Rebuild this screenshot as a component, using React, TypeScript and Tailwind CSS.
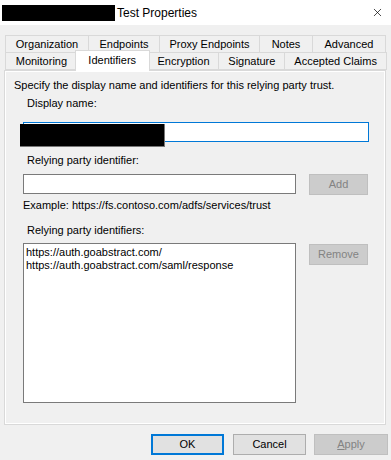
import { X } from 'lucide-react';

const rowOne = [
  { label: 'Organization', w: 'w-[83px]' },
  { label: 'Endpoints', w: 'w-[71px]' },
  { label: 'Proxy Endpoints', w: 'w-[100px]' },
  { label: 'Notes', w: 'w-[53px]' },
  { label: 'Advanced', w: 'w-[74px]' },
];

const rowTwo = [
  { label: 'Monitoring', w: 'w-[72px]' },
  { label: 'Identifiers', w: 'w-[69px]', active: true },
  { label: 'Encryption', w: 'w-[71px]' },
  { label: 'Signature', w: 'w-[66px]' },
  { label: 'Accepted Claims', w: 'w-[103px]' },
];

const identifiers = ['https://auth.goabstract.com/', 'https://auth.goabstract.com/saml/response'];

export default function App() {
  return (
    <div className="w-[391px] h-[460px] bg-[#f0f0f0] text-black text-[11px] font-['Liberation_Sans',Arial,sans-serif] overflow-hidden select-none">
      {/* Title bar */}
      <div className="h-[25px] bg-white flex items-center">
        <div className="ml-[2px] w-[113px] h-[16px] bg-black" />
        <span className="ml-[2px] text-[12px] text-black">Test Properties</span>
        <X className="ml-auto mr-[7px] w-[13px] h-[13px] text-black" strokeWidth={1.3} />
      </div>

      <div className="mx-[4px] mt-[10px]">
        {/* Tabs */}
        <div className="flex pl-[1px]">
          {rowOne.map((t) => (
            <div
              key={t.label}
              className={`${t.w} h-[17px] border border-r-0 last:border-r border-[#d9d9d9] border-b-0 flex items-center justify-center leading-none`}
            >
              {t.label}
            </div>
          ))}
        </div>
        <div className="flex pl-[1px] items-end h-[18px] relative z-10">
          {rowTwo.map((t) =>
            t.active ? (
              <div
                key={t.label}
                className={`${t.w} h-[20px] -mx-[2px] -mb-[1px] px-[2px] box-content bg-white border border-[#d9d9d9] border-b-0 flex items-start justify-center pt-0 leading-[18px] relative z-10`}
              >
                {t.label}
              </div>
            ) : (
              <div
                key={t.label}
                className={`${t.w} h-[18px] border border-r-0 last:border-r border-[#d9d9d9] flex items-center justify-center leading-none`}
              >
                {t.label}
              </div>
            )
          )}
        </div>

        {/* Tab panel */}
        <div className="h-[355px] w-[382px] border border-[#d9d9d9] shadow-[inset_1px_1px_0_#fff,inset_-1px_-1px_0_#fff] pl-[9px]">
          <div className="mt-[6px] h-[16px] leading-[16px]">Specify the display name and identifiers for this relying party trust.</div>

          <div className="pl-[9px]">
            <div className="mt-[2px] h-[16px] leading-[16px] pl-[4px]">Display name:</div>
            <div className="mt-[11px] relative">
              <div className="w-[346px] h-[20px] bg-white border border-[#0078d7]" />
              <div className="absolute left-[-3px] top-[2px] w-[145px] h-[23px] bg-black border-b border-r border-[#777]" />
            </div>

            <div className="mt-[10px] h-[16px] leading-[16px] pl-[4px]">Relying party identifier:</div>
            <div className="mt-[6px] flex items-start">
              <div className="w-[273px] h-[20px] bg-white border border-[#7a7a7a]" />
              <button className="ml-[13px] w-[59px] h-[21px] bg-[#cccccc] border border-[#bfbfbf] text-[#838383] leading-none">
                Add
              </button>
            </div>

            <div className="mt-[2px] h-[16px] leading-[16px]">Example: https://fs.contoso.com/adfs/services/trust</div>

            <div className="mt-[9px] h-[16px] leading-[16px] pl-[4px]">Relying party identifiers:</div>
            <div className="mt-[5px] flex items-start">
              <div className="w-[273px] h-[160px] bg-white border border-[#7a7a7a] pl-[2px] pt-[2px]">
                {identifiers.map((id) => (
                  <div key={id} className="h-[13px] leading-[13px]">
                    {id}
                  </div>
                ))}
              </div>
              <button className="ml-[13px] mt-[1px] w-[59px] h-[21px] bg-[#cccccc] border border-[#bfbfbf] text-[#838383] leading-none">
                Remove
              </button>
            </div>
          </div>
        </div>
      </div>

      {/* Dialog buttons */}
      <div className="mt-[9px] flex pl-[151px] gap-[9px]">
        <button className="w-[73px] h-[21px] bg-[#e1e1e1] border-2 border-[#0078d7] leading-none">OK</button>
        <button className="w-[73px] h-[21px] bg-[#e1e1e1] border border-[#adadad] leading-none">Cancel</button>
        <button className="-ml-[1px] w-[74px] h-[21px] bg-[#cccccc] border border-[#bfbfbf] text-[#838383] leading-none">
          <span className="underline">A</span>pply
        </button>
      </div>
    </div>
  );
}
